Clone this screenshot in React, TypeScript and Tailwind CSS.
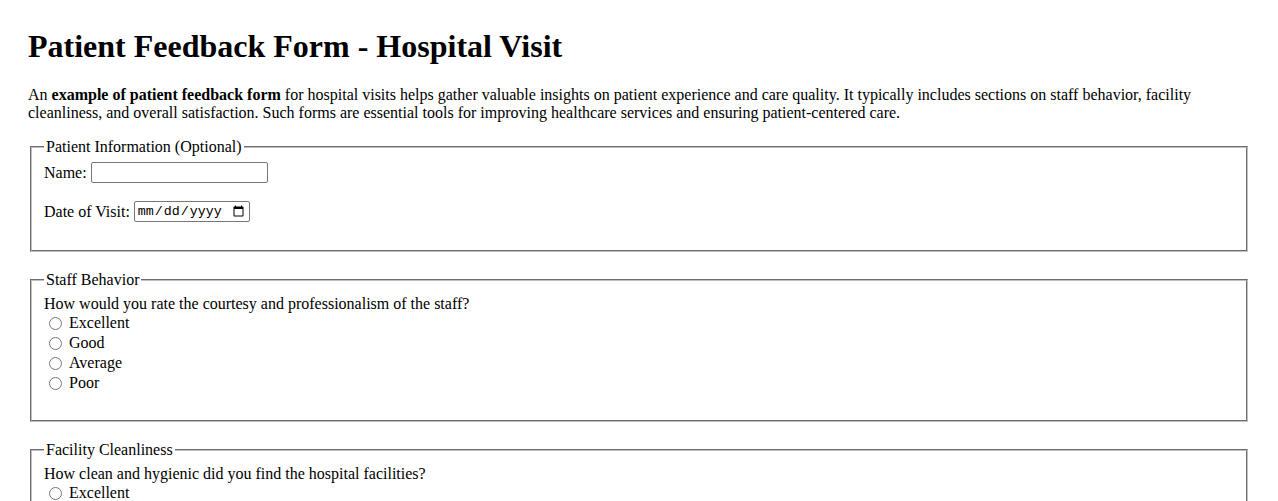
const sections = [
  {
    legend: "Staff Behavior",
    question: "How would you rate the courtesy and professionalism of the staff?",
    name: "staff",
  },
  {
    legend: "Facility Cleanliness",
    question: "How clean and hygienic did you find the hospital facilities?",
    name: "cleanliness",
  },
];

const options = ["Excellent", "Good", "Average", "Poor"];

export default function App() {
  return (
    <div className="min-h-screen bg-white px-[28px] pt-[28px] pb-8 font-['Liberation_Serif','Times_New_Roman',serif] text-[16px] leading-[normal] text-black">
      <h1 className="mb-[21.44px] text-[32px] font-bold leading-[normal]">
        Patient Feedback Form - Hospital Visit
      </h1>
      <p className="mb-4">
        An <strong>example of patient feedback form</strong> for hospital visits helps gather valuable
        insights on patient experience and care quality. It typically includes sections on staff
        behavior, facility cleanliness, and overall satisfaction. Such forms are essential tools for
        improving healthcare services and ensuring patient-centered care.
      </p>

      <form>
        <fieldset className="mx-[2px] mb-[19px] border-2 border-[#c0c0c0] px-3 pt-[5.6px] pb-[9px] [border-style:groove]">
          <legend className="px-[2px]">Patient Information (Optional)</legend>
          <div className="flex h-[21px] items-center">
            <label htmlFor="name">Name:</label>
            <input
              id="name"
              type="text"
              className="ml-1 h-[21px] w-[177px] rounded-[2px] border border-[#767676] bg-white px-[2px] font-['Liberation_Sans',Arial,sans-serif] text-[13.33px]"
            />
          </div>
          <div className="mt-[18.4px] flex h-[21px] items-center">
            <label htmlFor="visit">Date of Visit:</label>
            <input
              id="visit"
              type="date"
              className="ml-1 h-[21px] w-[116px] rounded-[2px] border border-[#767676] bg-white px-[2px] font-['Liberation_Mono',monospace] text-[13.33px]"
            />
          </div>
          <div className="h-[18.4px]" />
        </fieldset>

        {sections.map((section) => {
          return (
            <fieldset
              key={section.name}
              className="mx-[2px] mb-[19px] border-2 border-[#c0c0c0] px-3 pt-[6.6px] pb-[8px] [border-style:groove]"
            >
              <legend className="px-[2px]">{section.legend}</legend>
              <p>{section.question}</p>
              {options.map((option) => {
                return (
                  <div key={option} className="flex h-5 items-center">
                    <input
                      type="radio"
                      id={section.name + option}
                      name={section.name}
                      className="mr-[7px] ml-[5px] h-[13px] w-[13px]"
                    />
                    <label htmlFor={section.name + option}>{option}</label>
                  </div>
                );
              })}
              <div className="h-[18.4px]" />
            </fieldset>
          );
        })}
      </form>
    </div>
  );
}
